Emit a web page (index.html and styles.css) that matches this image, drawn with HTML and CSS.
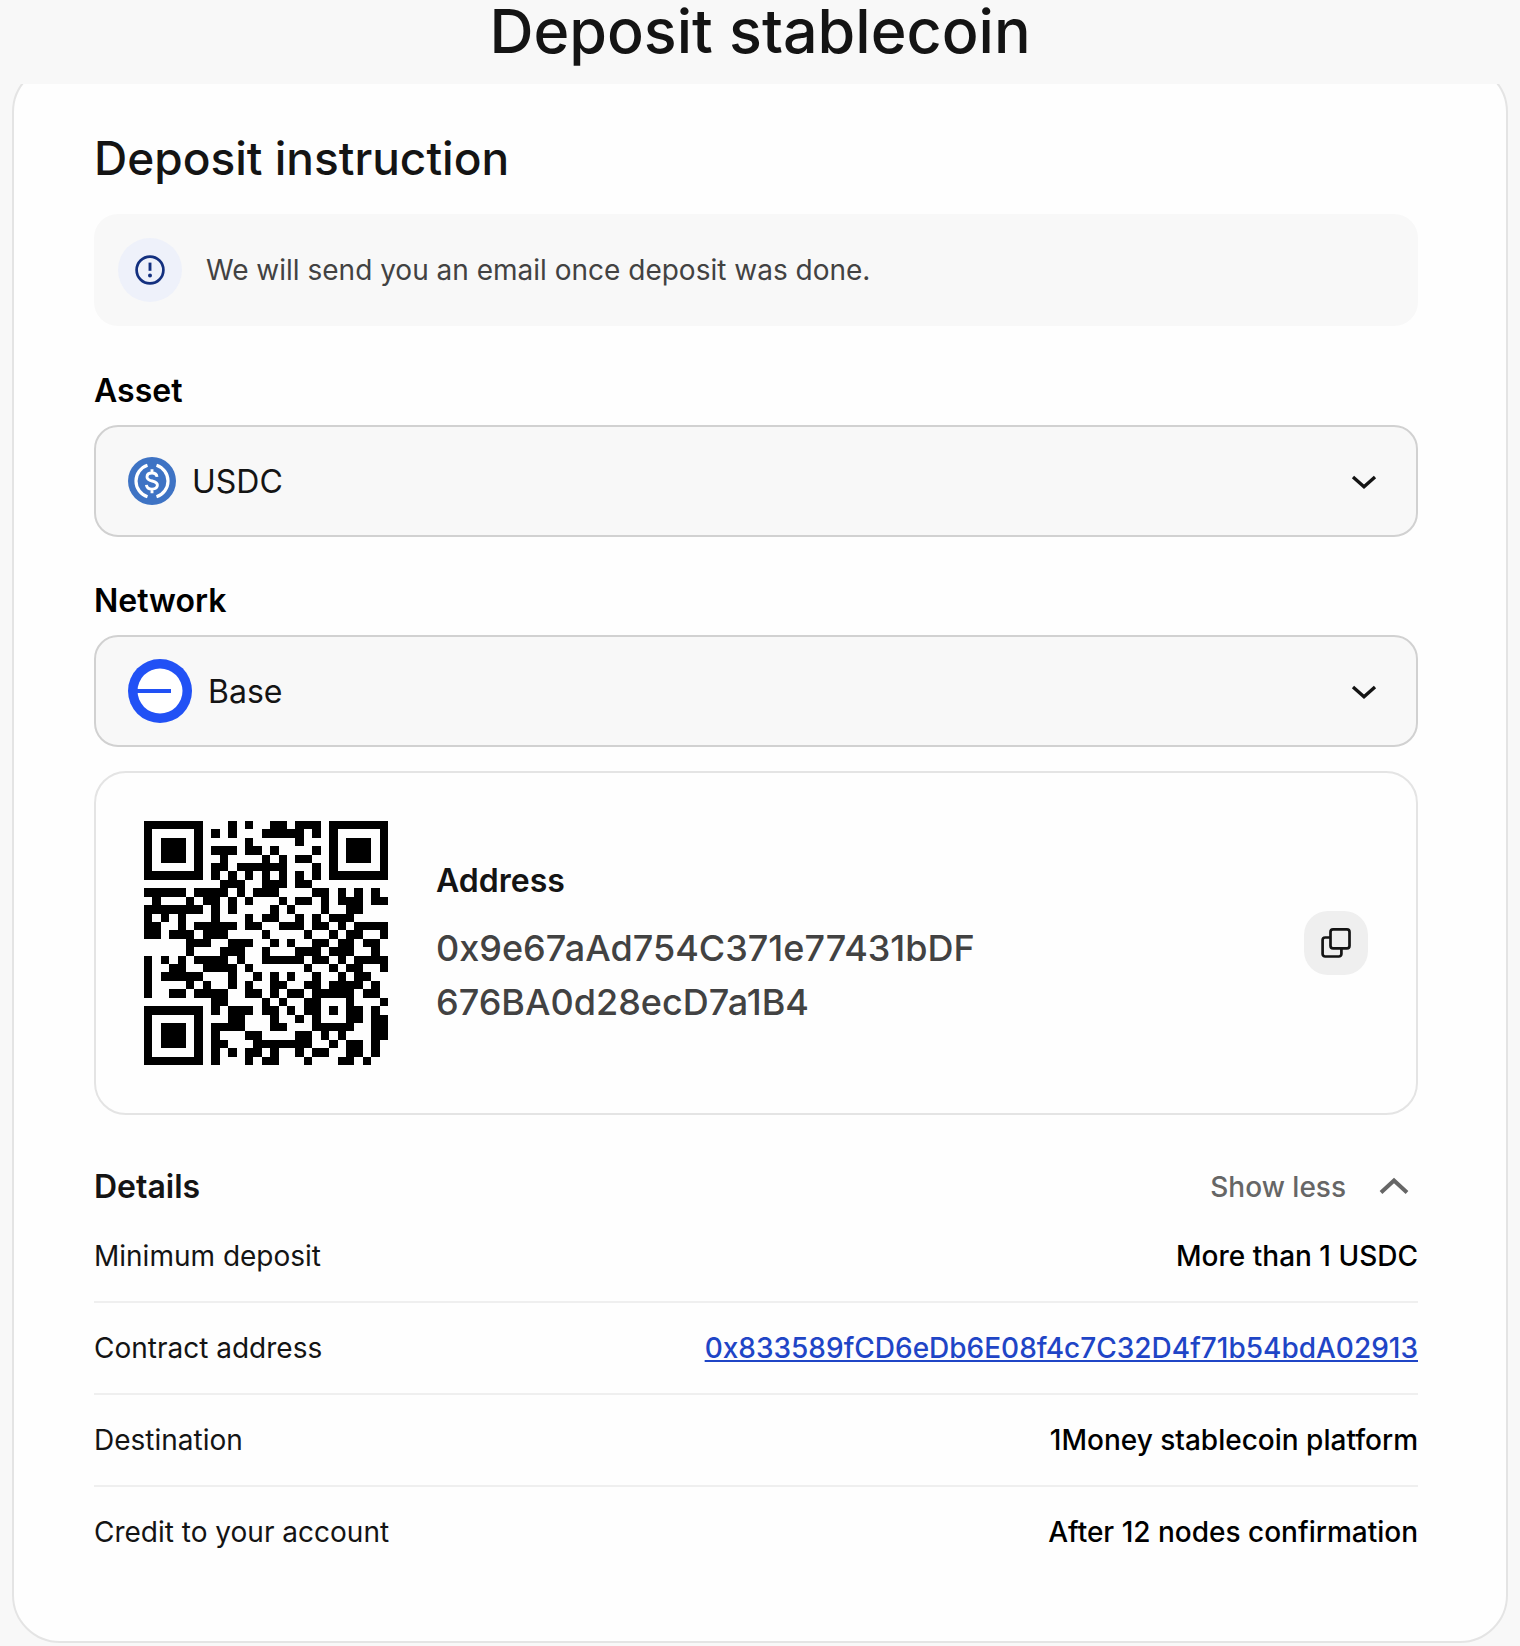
FILE: index.html
```html
<!DOCTYPE html>
<html lang="en">
<head>
    <meta charset="UTF-8">
    <meta name="viewport" content="width=device-width, initial-scale=1.0">
    <title>Deposit stablecoin</title>
    <link rel="stylesheet" href="styles.css">
</head>
<body>
    <header class="page-header">
        <h1>Deposit stablecoin</h1>
    </header>
    <main class="card">
        <h2 class="title">Deposit instruction</h2>
        <div class="notice">
            <span class="notice-icon">
                <svg width="32" height="32" viewBox="0 0 32 32" fill="none" aria-hidden="true">
                    <circle cx="16" cy="16" r="13.4" stroke="#13307f" stroke-width="2.7"/>
                    <path d="M16 8.6v8.2" stroke="#13307f" stroke-width="2.9"/>
                    <circle cx="16" cy="21.4" r="2" fill="#13307f"/>
                </svg>
            </span>
            <p>We will send you an email once deposit was done.</p>
        </div>

        <div class="field">
            <label for="asset">Asset</label>
            <div class="select-box">
                <svg width="48" height="48" viewBox="0 0 48 48" fill="none" aria-hidden="true">
                    <circle cx="24" cy="24" r="24" fill="#3e73c4"/>
                    <path d="M19.5 8.2a16.6 16.6 0 0 0 0 31.6M28.5 8.2a16.6 16.6 0 0 1 0 31.6" stroke="#fff" stroke-width="3.2"/>
                    <path d="M29 19.8c-.3-2.600-2.200-3.800-5-3.800-3 0-5 1.500-5 3.900 0 5.500 10.400 2.700 10.400 8.200 0 2.500-2.200 4-5.400 4-3.200 0-5.300-1.500-5.600-4.300M24 12.200v4M24 32v4.200" stroke="#fff" stroke-width="2.9"/>
                </svg>
                <select id="asset">
                    <option>USDC</option>
                    <option>USDT</option>
                </select>
                <svg class="chevron" width="32" height="32" viewBox="0 0 32 32" fill="none" aria-hidden="true">
                    <path d="M5 12l11 9.700 11-9.700" stroke="#141414" stroke-width="3.400"/>
                </svg>
            </div>
        </div>

        <div class="field">
            <label for="network">Network</label>
            <div class="select-box">
                <svg width="64" height="64" viewBox="0 0 64 64" aria-hidden="true">
                    <circle cx="32" cy="32" r="32" fill="#2151f5"/>
                    <circle cx="32" cy="32" r="22.5" fill="#fff"/>
                    <path d="M8 30h35v4H8z" fill="#2151f5"/>
                </svg>
                <select id="network">
                    <option>Base</option>
                    <option>Ethereum</option>
                </select>
                <svg class="chevron" width="32" height="32" viewBox="0 0 32 32" fill="none" aria-hidden="true">
                    <path d="M5 12l11 9.700 11-9.700" stroke="#141414" stroke-width="3.400"/>
                </svg>
            </div>
        </div>

        <section class="address-card">
            <svg class="qr" id="qr" viewBox="0 0 29 29" role="img" aria-label="Address QR code"></svg>
            <div class="address">
                <h3>Address</h3>
                <p id="addressValue">0x9e67aAd754C371e77431bDF676BA0d28ecD7a1B4</p>
            </div>
            <button type="button" class="copy-btn" id="copyBtn" aria-label="Copy address">
                <svg width="32" height="32" viewBox="0 0 32 32" fill="none" stroke="#141414" stroke-width="2.7" aria-hidden="true">
                    <rect x="10.5" y="2.3" width="19" height="19" rx="2.6"/>
                    <path d="M10.5 10.5H5.2a2.6 2.6 0 0 0-2.6 2.6v13.8a2.6 2.6 0 0 0 2.6 2.6h13.6a2.6 2.6 0 0 0 2.6-2.6v-5.6"/>
                </svg>
            </button>
        </section>

        <div class="details-header">
            <h3>Details</h3>
            <button type="button" class="toggle-btn" id="toggleBtn" aria-expanded="true">
                <span id="toggleText">Show less</span>
                <svg width="32" height="32" viewBox="0 0 32 32" fill="none" aria-hidden="true">
                    <path d="M3 21.500 16 9.500l13 12" stroke="#666" stroke-width="4"/>
                </svg>
            </button>
        </div>
        <table class="details" id="details">
            <tr>
                <th scope="row">Minimum deposit</th>
                <td>More than 1 USDC</td>
            </tr>
            <tr>
                <th scope="row">Contract address</th>
                <td><a href="#">0x833589fCD6eDb6E08f4c7C32D4f71b54bdA02913</a></td>
            </tr>
            <tr>
                <th scope="row">Destination</th>
                <td>1Money stablecoin platform</td>
            </tr>
            <tr>
                <th scope="row">Credit to your account</th>
                <td>After 12 nodes confirmation</td>
            </tr>
        </table>
    </main>
    <script src="script.js"></script>
</body>
</html>
```

FILE: styles.css
```css
* {
    box-sizing: border-box;
}
body {
    font-family: Inter, "Liberation Sans", sans-serif;
    margin: 0;
    padding: 0 12px 2px;
    background-color: #f8f8f8;
    color: #141414;
    font-size: 28px;
    line-height: 40px;
}
h1, h2, h3, p {
    margin: 0;
}
button, select {
    font-family: inherit;
    color: inherit;
    border: none;
    padding: 0;
    cursor: pointer;
}
svg {
    display: block;
    flex-shrink: 0;
}
/* Header */
.page-header {
    position: sticky;
    top: 0;
    z-index: 10;
    height: 84px;
    background-color: #f8f8f8;
    text-align: center;
}
.page-header h1 {
    font-size: 61px;
    line-height: 62px;
    font-weight: 500;
}
/* Card, its top edge slides under the header */
.card {
    margin-top: -20px;
    padding: 64px 88px 64px 80px;
    background-color: #fefefe;
    border: 2px solid #e4e4e4;
    border-radius: 48px;
}
.title {
    font-size: 46px;
    line-height: 56px;
    font-weight: 500;
    margin-bottom: 28px;
}
/* Notice */
.notice {
    display: flex;
    align-items: center;
    gap: 24px;
    margin-bottom: 41px;
    padding: 24px;
    background-color: #f8f8f8;
    border-radius: 24px;
    color: #424242;
}
.notice-icon {
    display: flex;
    align-items: center;
    justify-content: center;
    width: 64px;
    height: 64px;
    border-radius: 50%;
    background-color: #eef1fa;
    flex-shrink: 0;
}
/* Fields */
.field + .field {
    margin-top: 40px;
}
.field label {
    display: block;
    margin-bottom: 10px;
    font-size: 32px;
    line-height: 48px;
    font-weight: 600;
    color: #000;
}
.select-box {
    display: flex;
    align-items: center;
    gap: 16px;
    height: 112px;
    padding: 0 36px 0 32px;
    background-color: #f8f8f8;
    border: 2px solid #d1d1d1;
    border-radius: 24px;
}
.select-box select {
    appearance: none;
    flex: 1;
    min-width: 0;
    height: 100%;
    background: transparent;
    font-size: 32px;
    outline: none;
}
.chevron {
    pointer-events: none;
}
/* Address */
.address-card {
    display: flex;
    align-items: center;
    gap: 48px;
    margin-top: 24px;
    padding: 48px;
    border: 2px solid #e4e4e4;
    border-radius: 32px;
}
.qr {
    width: 244px;
    height: 244px;
}
.address {
    flex: 1;
    min-width: 0;
}
.address h3,
.details-header h3 {
    font-size: 32px;
    line-height: 48px;
    font-weight: 600;
}
.address p {
    max-width: 548px;
    margin-top: 16px;
    font-size: 36px;
    line-height: 54px;
    font-weight: 500;
    color: #424242;
    overflow-wrap: anywhere;
}
.copy-btn {
    display: flex;
    align-items: center;
    justify-content: center;
    width: 64px;
    height: 64px;
    border-radius: 24px;
    background-color: #efefef;
}
/* Details */
.details-header {
    display: flex;
    justify-content: space-between;
    align-items: center;
    margin-top: 48px;
}
.toggle-btn {
    display: flex;
    align-items: center;
    gap: 32px;
    padding-right: 8px;
    background: transparent;
    font-size: 28px;
    line-height: 40px;
    font-weight: 500;
    color: #666;
}
.toggle-btn[aria-expanded="false"] svg {
    transform: rotate(180deg);
}
.details {
    width: 100%;
    border-collapse: separate;
    border-spacing: 0;
}
.details th,
.details td {
    padding: 25px 0;
    border-bottom: 2px solid #efefef;
    text-align: left;
    font-weight: 400;
}
.details td {
    text-align: right;
    font-weight: 500;
    color: #000;
}
.details tr:last-child th,
.details tr:last-child td {
    border-bottom: none;
}
.details a {
    color: #1f45c6;
}
/* Responsive Design */
@media (max-width: 768px) {
    .card {
        padding: 40px 24px;
    }
    .address-card {
        flex-direction: column;
    }
    .page-header h1 {
        font-size: 36px;
    }
}
```

FILE: script.js
```js
// QR modules, one string per row
const qrRows = [
    '11111110001010011011101111111',
    '10000010101000111110101000001',
    '10111010000010000010001011101',
    '10111010111011010000101011101',
    '10111010010000101011001011101',
    '10000010110111111000101000001',
    '11111110101010101010101111111',
    '00000000011100111011000000000',
    '11111011110101110000110101010',
    '01000101101010001011010111011',
    '11111110101000010100010011000',
    '10101000100010110010101110000',
    '11001011111011001110110101111',
    '11011101110000100001001011001',
    '00000111001110010100110110110',
    '00000100011100100011101110010',
    '10101011110100111110110101111',
    '10011001111010000001001011001',
    '10111110001001010100100101100',
    '10000101001010011001101111010',
    '10011011110011010110111110110',
    '00000000110000101001100010001',
    '11111110101110110101101011010',
    '10000010001100010010100011011',
    '10111010111100011000111110011',
    '10111010100011000011010100011',
    '10111010110001111111001011010',
    '10000010101011010010110011010',
    '11111110100010110001000110100'
];

// Draw all dark modules as one path
function drawQr(svg, rows) {
    let d = '';
    rows.forEach((row, y) => {
        [...row].forEach((bit, x) => {
            if (bit === '1') d += `M${x} ${y}h1v1h-1z`;
        });
    });
    const path = document.createElementNS('http://www.w3.org/2000/svg', 'path');
    path.setAttribute('d', d);
    path.setAttribute('shape-rendering', 'crispEdges');
    svg.appendChild(path);
}

drawQr(document.getElementById('qr'), qrRows);

document.getElementById('copyBtn').addEventListener('click', () => {
    navigator.clipboard.writeText(document.getElementById('addressValue').textContent);
});

// Toggle details table
const toggleBtn = document.getElementById('toggleBtn');
toggleBtn.addEventListener('click', () => {
    const details = document.getElementById('details');
    details.hidden = !details.hidden;
    toggleBtn.setAttribute('aria-expanded', String(!details.hidden));
    document.getElementById('toggleText').textContent = details.hidden ? 'Show more' : 'Show less';
});
```
